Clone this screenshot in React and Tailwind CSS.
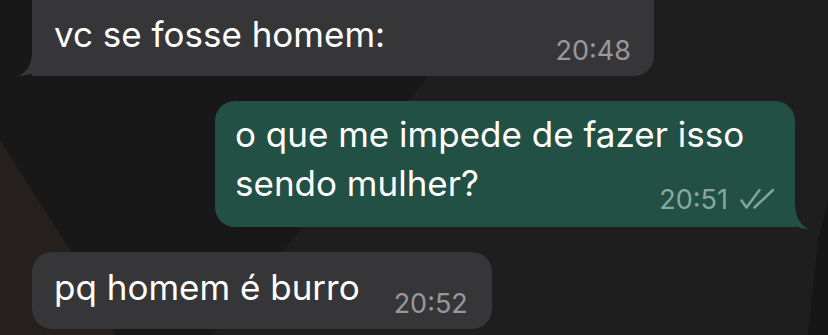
import React from 'react';

function TailLeft({ color }) {
  return (
    <svg className="absolute bottom-0 left-[-13px]" width="34" height="24" viewBox="0 0 34 24">
      <path d="M13 0 C13 11 9 19 0 24 C6 24.5 14 21 20 21 C25 21 29 24 34 24 L34 0 Z" fill={color} />
    </svg>
  );
}

function TailRight({ color }) {
  return (
    <svg className="absolute bottom-[-2px] right-[-13px] -scale-x-100" width="34" height="26" viewBox="0 0 34 26">
      <path d="M13 0 C13 12 9 21 0 26 C6 26.5 14 22 20 22 C25 22 29 24 34 24 L34 0 Z" fill={color} />
    </svg>
  );
}

function Ticks() {
  return (
    <svg width="35" height="23" viewBox="0 0 35 23" className="mb-[3px]">
      <path d="M1.5 13.5 L6.5 20.5 L19.5 3" fill="none" stroke="#7fa499" strokeWidth="2.5" strokeLinecap="round" strokeLinejoin="round" />
      <path d="M14.5 20.5 L33 3" fill="none" stroke="#7fa499" strokeWidth="2.5" strokeLinecap="round" />
    </svg>
  );
}

export default function App() {
  return (
    <div className="relative w-[828px] h-[335px] overflow-hidden bg-[#181818] font-['Inter','Liberation_Sans',sans-serif]">
      {/* wallpaper shapes */}
      <svg className="absolute inset-0" width="828" height="335" viewBox="0 0 828 335">
        <polygon points="492,0 828,0 828,335 212,335" fill="#1e1e1e" />
        <polygon points="0,140 70,250 115,335 0,335" fill="#251f1d" />
        <polygon points="818,240 828,200 828,335 808,335" fill="#161616" />
      </svg>

      <div className="relative flex flex-col">
        {/* incoming 1 */}
        <div className="relative ml-[32px] mt-[-22px] w-[622px] rounded-[20px] rounded-bl-none bg-[#363638] pl-[22px] pr-[23px] pt-[32px] pb-[12px] flex items-end justify-between">
          <p className="text-[35px] leading-[49px] pb-[5px] text-white">vc se fosse homem:</p>
          <span className="text-[27px] leading-[27px] text-[#98989c]">20:48</span>
          <TailLeft color="#363638" />
        </div>

        {/* outgoing */}
        <div className="relative ml-auto mr-[33px] mt-[25px] w-[580px] rounded-[20px] rounded-br-none bg-[#235045] pl-[20px] pr-[20px] pt-[9px] pb-[14px] flex flex-col">
          <p className="text-[35px] leading-[49px] text-white">o que me impede de fazer isso</p>
          <div className="flex items-end justify-between">
            <p className="text-[35px] leading-[49px] pb-[5px] text-white">sendo mulher?</p>
            <div className="flex items-end gap-[12px]">
              <span className="text-[27px] leading-[27px] text-[#87a89e]">20:51</span>
              <Ticks />
            </div>
          </div>
          <TailRight color="#235045" />
        </div>

        {/* incoming 2 */}
        <div className="relative self-start ml-[32px] mt-[25px] rounded-[20px] bg-[#363638] pl-[22px] pr-[24px] pt-[11px] pb-[12px] flex items-end gap-[34px]">
          <p className="text-[35px] leading-[49px] pb-[5px] text-white">pq homem é burro</p>
          <span className="text-[27px] leading-[27px] text-[#98989c]">20:52</span>
        </div>
      </div>
    </div>
  );
}
